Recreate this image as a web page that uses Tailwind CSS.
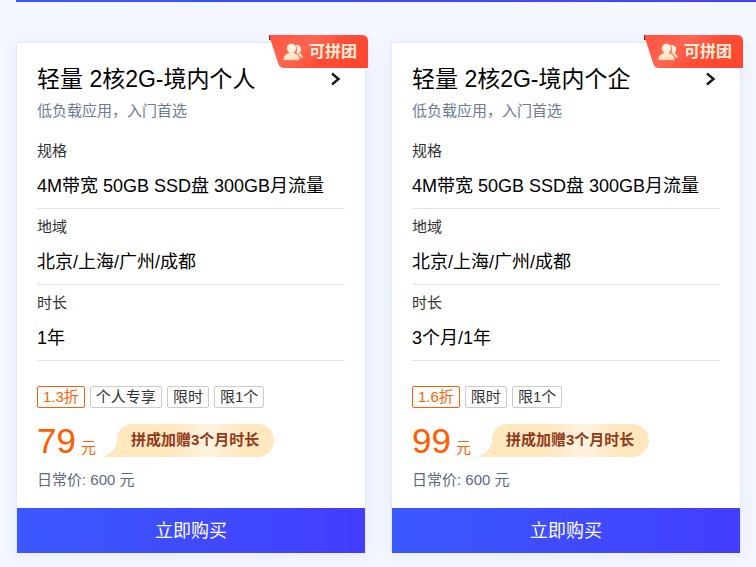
<!DOCTYPE html>
<html lang="zh-CN">
<head>
  <meta charset="UTF-8"/>
  <meta name="viewport" content="width=device-width, initial-scale=1.0"/>
  <title>轻量应用服务器 特惠</title>
  <script src="https://cdn.jsdelivr.net/npm/@tailwindcss/browser@4"></script>
</head>
<body class="min-h-screen bg-[#f4f7ff] font-['Liberation_Sans','Noto_Sans_CJK_SC',sans-serif] text-black">

  <!-- shared fills, kept rendered so the cards can reference them -->
  <svg class="absolute h-0 w-0" aria-hidden="true">
    <defs>
      <linearGradient id="badgeFill" x1="0" y1="0" x2="1" y2="0.4">
        <stop offset="0" stop-color="#ff5540"/>
        <stop offset="0.45" stop-color="#ff6551"/>
        <stop offset="0.7" stop-color="#ff4d35"/>
        <stop offset="1" stop-color="#ff4830"/>
      </linearGradient>
      <linearGradient id="peopleFill" x1="0" y1="0" x2="0" y2="1">
        <stop offset="0" stop-color="#fff6e6"/>
        <stop offset="1" stop-color="#ffe3bd"/>
      </linearGradient>
      <linearGradient id="bubbleFill" x1="0" y1="0" x2="1" y2="0">
        <stop offset="0.4" stop-color="#ffe7c0"/>
        <stop offset="0.62" stop-color="#fff3e0"/>
        <stop offset="0.82" stop-color="#ffe7c0"/>
      </linearGradient>
    </defs>
  </svg>

  <header class="ml-4 h-[2px] bg-linear-to-r from-[#3a55ff] to-[#4340ff]"></header>

  <main class="grid grid-cols-2 gap-[25px] pt-10 pr-[15px] pb-[14px] pl-4">

    <article class="relative border-x border-t border-[#e6e9f2] bg-white shadow-[0_2px_16px_rgba(54,88,255,0.08)]">
      <div class="absolute -top-2 -right-[3px] flex h-[33px] w-[99px] items-center gap-[6px] pl-[14px]">
        <svg class="absolute inset-0" width="99" height="33" viewBox="0 0 99 33" aria-hidden="true">
          <path d="M0 0h3v5H0z" fill="#a5200f"/>
          <path d="M1 0H93Q99 0 99 6V33H15Q10.500 33 9 28L1 3z" fill="url(#badgeFill)"/>
        </svg>
        <svg class="relative" width="20" height="18" viewBox="0 0 20 18" aria-hidden="true">
          <path d="M12.500 2.200c3.200-.6 5.600 1.200 5.600 4 0 1.700-.8 3-1.900 3.900 1.900.9 3.200 2.500 3.800 4.500h-2.600c-.9-2.200-2.300-3.600-4.100-4.600 1.100-2.500.9-5.600-.8-7.800z" fill="url(#peopleFill)"/>
          <path d="M8.500.5c2.900 0 4.900 2 4.900 4.700 0 2-.9 3.700-2.300 4.600 3.300 1 5.600 3.400 5.900 6.200 0 .8-.4 1.200-1.200 1.200H1.200C.4 17.200 0 16.800 0 16c.3-2.800 2.600-5.200 5.900-6.200-1.400-.9-2.300-2.600-2.300-4.600C3.600 2.500 5.600.5 8.500.5z" fill="url(#peopleFill)" stroke="#ff604b" stroke-width="0.600"/>
        </svg>
        <span class="relative text-base leading-5 font-bold text-[#fff0dc]">可拼团</span>
      </div>

      <div class="px-5 pt-5">
        <a href="#" class="flex items-center justify-between">
          <h2 class="text-[23px] leading-8">轻量 2核2G-境内个人</h2>
          <svg width="20" height="20" viewBox="0 0 20 20" fill="none" stroke="#1a1a1a" stroke-width="2.400" aria-hidden="true"><path d="M7 4.500l6.500 5.500L7 15.500"/></svg>
        </a>
        <p class="mt-[6px] text-[15px] leading-5 text-[#6e7a96]">低负载应用，入门首选</p>

        <dl class="mt-3">
          <div class="border-b border-[#e3e6eb] pt-2 pb-[10px]">
            <dt class="text-[15px] leading-5 text-[#333]">规格</dt>
            <dd class="mt-[13px] text-lg leading-6 whitespace-nowrap">4M带宽 50GB SSD盘 300GB月流量</dd>
          </div>
          <div class="border-b border-[#e3e6eb] pt-2 pb-[10px]">
            <dt class="text-[15px] leading-5 text-[#333]">地域</dt>
            <dd class="mt-[13px] text-lg leading-6">北京/上海/广州/成都</dd>
          </div>
          <div class="border-b border-[#e3e6eb] pt-2 pb-[10px]">
            <dt class="text-[15px] leading-5 text-[#333]">时长</dt>
            <dd class="mt-[13px] text-lg leading-6">1年</dd>
          </div>
        </dl>

        <ul class="mt-[25px] flex gap-[5px] text-[15px] leading-5 text-[#333]">
          <li class="rounded-[2px] border border-[#ff5e00] px-[5px] text-[#ff5e00]">1.3折</li>
          <li class="rounded-[2px] border border-[#ccc] px-[5px]">个人专享</li>
          <li class="rounded-[2px] border border-[#ccc] px-[5px]">限时</li>
          <li class="rounded-[2px] border border-[#ccc] px-[5px]">限1个</li>
        </ul>

        <div class="mt-4 flex h-[33px] items-center text-[#ff5e00]">
          <p class="flex items-baseline gap-[5px] pt-[3px]">
            <span class="text-[35px] leading-8">79</span>
            <span class="text-[15px]">元</span>
          </p>
          <p class="relative ml-[6px] flex h-[33px] w-[172px] items-center pl-[29px] text-[15px] font-bold whitespace-nowrap text-[#8f3a1c]">
            <svg class="absolute inset-0" width="172" height="33" viewBox="0 0 172 33" aria-hidden="true"><path d="M0 33C8 30 15 24 15 16 15 7 21 0 31 0H155.500A16.500 16.500 0 0 1 155.500 33z" fill="url(#bubbleFill)"/></svg>
            <span class="relative">拼成加赠3个月时长</span>
          </p>
        </div>

        <p class="mt-[13px] text-[15px] leading-5 text-[#5c6880]">日常价: 600 元</p>
      </div>

      <button type="button" class="mt-[18px] block h-[45px] w-full bg-linear-to-r from-[#3a58ff] to-[#433dff] text-lg leading-6 text-white">立即购买</button>
    </article>

    <article class="relative border-x border-t border-[#e6e9f2] bg-white shadow-[0_2px_16px_rgba(54,88,255,0.08)]">
      <div class="absolute -top-2 -right-[3px] flex h-[33px] w-[99px] items-center gap-[6px] pl-[14px]">
        <svg class="absolute inset-0" width="99" height="33" viewBox="0 0 99 33" aria-hidden="true">
          <path d="M0 0h3v5H0z" fill="#a5200f"/>
          <path d="M1 0H93Q99 0 99 6V33H15Q10.500 33 9 28L1 3z" fill="url(#badgeFill)"/>
        </svg>
        <svg class="relative" width="20" height="18" viewBox="0 0 20 18" aria-hidden="true">
          <path d="M12.500 2.200c3.200-.6 5.600 1.200 5.600 4 0 1.700-.8 3-1.900 3.900 1.900.9 3.200 2.500 3.800 4.500h-2.600c-.9-2.200-2.300-3.600-4.100-4.600 1.100-2.500.9-5.600-.8-7.800z" fill="url(#peopleFill)"/>
          <path d="M8.500.5c2.900 0 4.900 2 4.900 4.700 0 2-.9 3.700-2.300 4.600 3.300 1 5.600 3.400 5.900 6.200 0 .8-.4 1.200-1.200 1.200H1.200C.4 17.200 0 16.800 0 16c.3-2.800 2.600-5.200 5.900-6.200-1.400-.9-2.300-2.600-2.300-4.600C3.600 2.500 5.600.5 8.500.5z" fill="url(#peopleFill)" stroke="#ff604b" stroke-width="0.600"/>
        </svg>
        <span class="relative text-base leading-5 font-bold text-[#fff0dc]">可拼团</span>
      </div>

      <div class="px-5 pt-5">
        <a href="#" class="flex items-center justify-between">
          <h2 class="text-[23px] leading-8">轻量 2核2G-境内个企</h2>
          <svg width="20" height="20" viewBox="0 0 20 20" fill="none" stroke="#1a1a1a" stroke-width="2.400" aria-hidden="true"><path d="M7 4.500l6.500 5.500L7 15.500"/></svg>
        </a>
        <p class="mt-[6px] text-[15px] leading-5 text-[#6e7a96]">低负载应用，入门首选</p>

        <dl class="mt-3">
          <div class="border-b border-[#e3e6eb] pt-2 pb-[10px]">
            <dt class="text-[15px] leading-5 text-[#333]">规格</dt>
            <dd class="mt-[13px] text-lg leading-6 whitespace-nowrap">4M带宽 50GB SSD盘 300GB月流量</dd>
          </div>
          <div class="border-b border-[#e3e6eb] pt-2 pb-[10px]">
            <dt class="text-[15px] leading-5 text-[#333]">地域</dt>
            <dd class="mt-[13px] text-lg leading-6">北京/上海/广州/成都</dd>
          </div>
          <div class="border-b border-[#e3e6eb] pt-2 pb-[10px]">
            <dt class="text-[15px] leading-5 text-[#333]">时长</dt>
            <dd class="mt-[13px] text-lg leading-6">3个月/1年</dd>
          </div>
        </dl>

        <ul class="mt-[25px] flex gap-[5px] text-[15px] leading-5 text-[#333]">
          <li class="rounded-[2px] border border-[#ff5e00] px-[5px] text-[#ff5e00]">1.6折</li>
          <li class="rounded-[2px] border border-[#ccc] px-[5px]">限时</li>
          <li class="rounded-[2px] border border-[#ccc] px-[5px]">限1个</li>
        </ul>

        <div class="mt-4 flex h-[33px] items-center text-[#ff5e00]">
          <p class="flex items-baseline gap-[5px] pt-[3px]">
            <span class="text-[35px] leading-8">99</span>
            <span class="text-[15px]">元</span>
          </p>
          <p class="relative ml-[6px] flex h-[33px] w-[172px] items-center pl-[29px] text-[15px] font-bold whitespace-nowrap text-[#8f3a1c]">
            <svg class="absolute inset-0" width="172" height="33" viewBox="0 0 172 33" aria-hidden="true"><path d="M0 33C8 30 15 24 15 16 15 7 21 0 31 0H155.500A16.500 16.500 0 0 1 155.500 33z" fill="url(#bubbleFill)"/></svg>
            <span class="relative">拼成加赠3个月时长</span>
          </p>
        </div>

        <p class="mt-[13px] text-[15px] leading-5 text-[#5c6880]">日常价: 600 元</p>
      </div>

      <button type="button" class="mt-[18px] block h-[45px] w-full bg-linear-to-r from-[#3a58ff] to-[#433dff] text-lg leading-6 text-white">立即购买</button>
    </article>

  </main>
</body>
</html>
